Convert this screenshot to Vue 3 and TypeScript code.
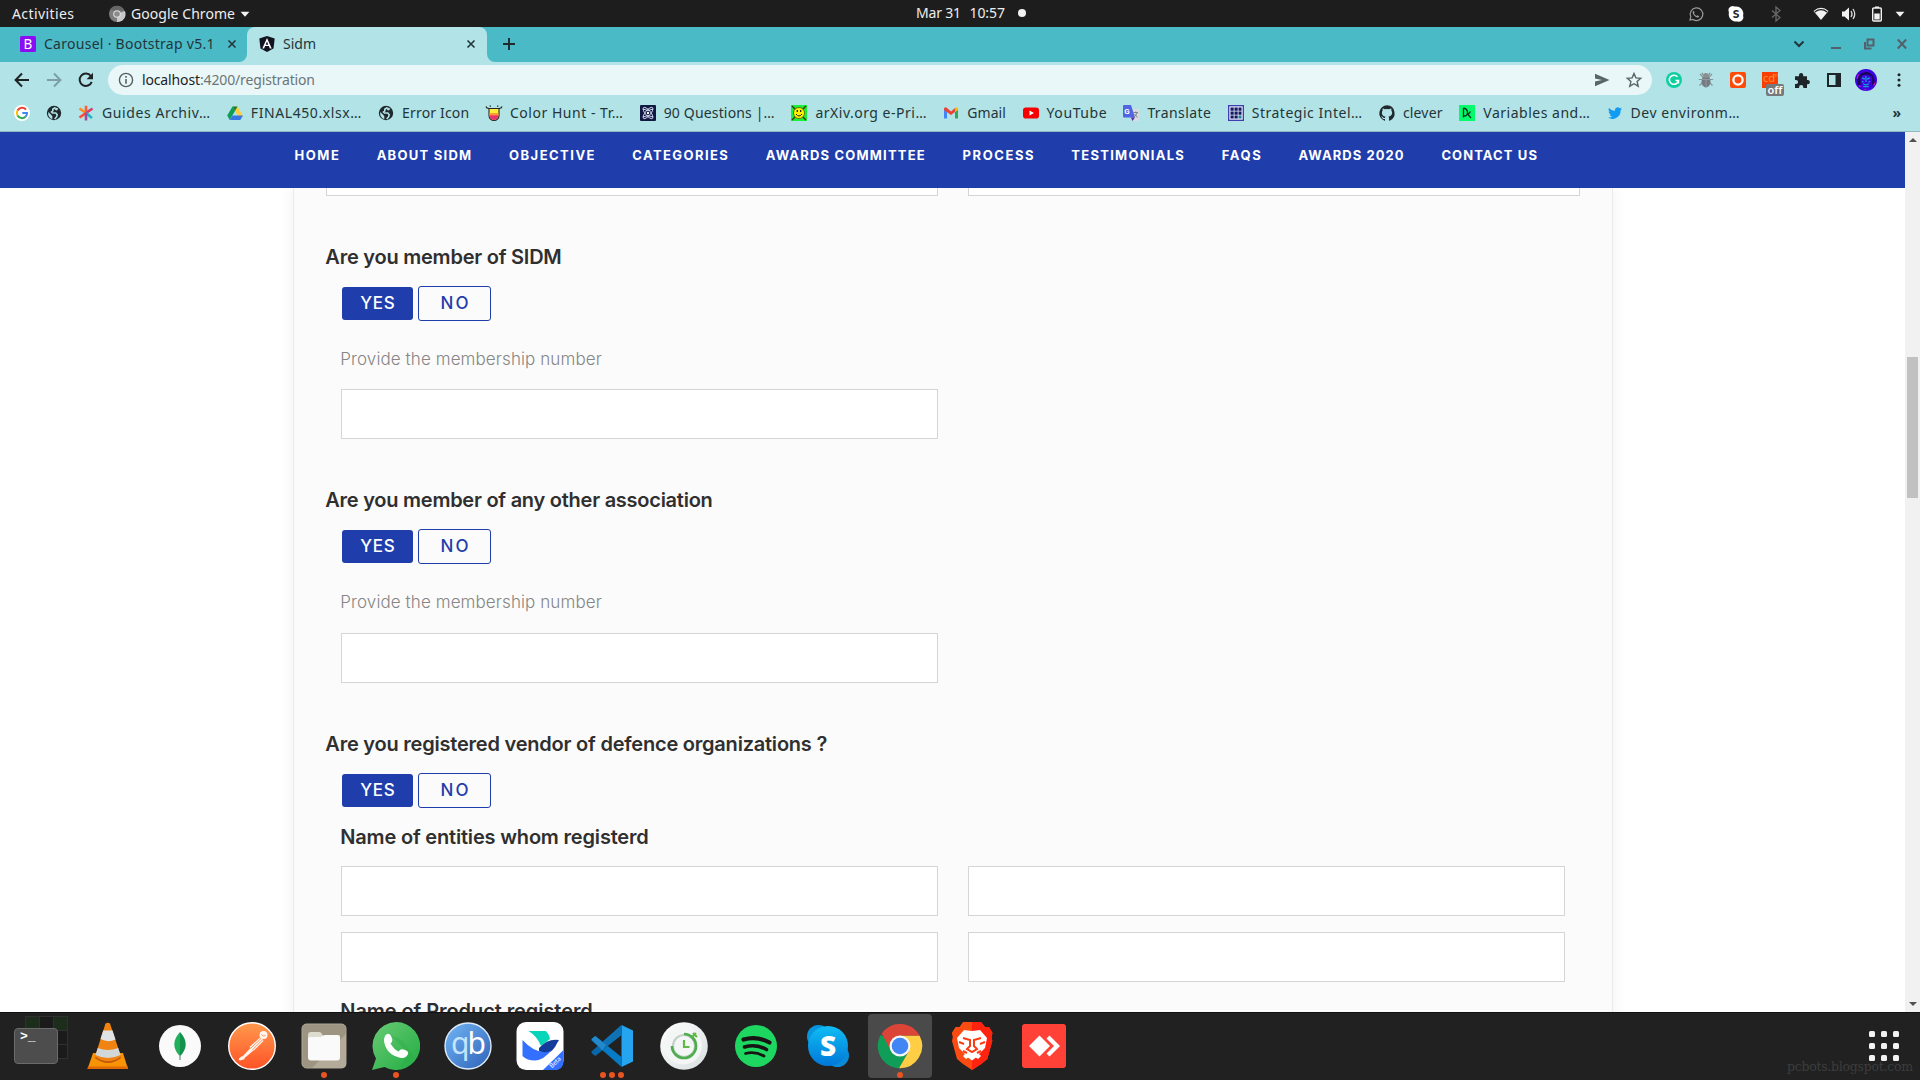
<script setup lang="ts">
import { h, type FunctionalComponent } from 'vue'

/* Tracks a label out (or in) so that it fills the given width in pixels. */
const vFit = {
  mounted(el: HTMLElement, binding: { value: number }) {
    const count = Array.from(el.textContent ?? '').length
    el.style.display = 'inline-block'
    el.style.whiteSpace = 'pre'
    el.style.letterSpacing = '0px'
    const natural = el.getBoundingClientRect().width
    if (count > 1) el.style.letterSpacing = `${(binding.value - natural) / (count - 1)}px`
    el.style.width = `${binding.value}px`
  },
}

const glyphs: Record<string, string> = {
  chromeGrey:
    '<circle cx="8" cy="8" r="8" fill="#7d7d7d"/><path d="M8 8L16 5A8 8 0 0 1 8 16Z" fill="#c9c9c9"/><path d="M1 4A8 8 0 0 1 15 4L8 5Z" fill="#666"/><circle cx="8" cy="8" r="3.8" fill="#e2e2e2"/><circle cx="8" cy="8" r="2.8" fill="#8b8b8b"/>',
  caret: '<path d="M3 5.5h10L8 11z" fill="#f2f2f2"/>',
  whatsappLine:
    '<path d="M2 14l.8-3.2A6.3 6.3 0 1 1 5 13.4z" fill="none" stroke="#9a9a9a" stroke-width="1.2"/><path d="M5.6 4.8l1 1.8-.6 1q1 1.8 2.6 2.4l1-.8 1.7 1q-.6 1.6-2.2 1.3Q5.500 10.300 4.600 6.600q0-1.300 1-1.800z" fill="#9a9a9a"/>',
  skypeMono:
    '<path d="M4.500 0a4 4 0 0 1 2 .6 7.300 7.300 0 0 1 8.600 9A4.400 4.400 0 0 1 9.500 15.400 7.300 7.300 0 0 1 .9 6.600 4.400 4.400 0 0 1 4.500 0z" fill="#fff"/><text x="8" y="12.300" text-anchor="middle" font-family="Lato, sans-serif" font-weight="900" font-size="12" fill="#222">S</text>',
  bluetooth: '<path d="M4 4.500l8 7L8 15V1l4 3.500-8 7" fill="none" stroke="#686868" stroke-width="1.300"/>',
  wifi: '<path d="M.5 5Q8-1.500 15.500 5L8 14z" fill="#f2f2f2"/><path d="M1.800 6Q8 1.300 14.200 6" fill="none" stroke="#1d1d1d" stroke-width="1.200"/>',
  volume:
    '<path d="M1 5.500h2.500L8 1.500v13L3.500 10.500H1z" fill="#f2f2f2"/><path d="M10 5q2 3 0 6M12 3q3.500 5 0 10" fill="none" stroke="#ddd" stroke-width="1.300"/>',
  battery: '<path d="M6 .5h4v1.500H6z" fill="#f2f2f2"/><rect x="3.700" y="2" width="8.600" height="13" rx="1" fill="none" stroke="#f2f2f2" stroke-width="1.400"/><path d="M5.300 7.500h5.400v6H5.300z" fill="#f2f2f2"/>',
  bootstrap:
    '<rect width="16" height="16" rx="1.500" fill="#8a0df5"/><text x="8" y="13" text-anchor="middle" font-family="Noto Sans, sans-serif" font-size="13.500" fill="#fff">B</text>',
  angular:
    '<path d="M8 0l7.700 2.500-1.200 10L8 16l-6.500-3.500L.3 2.500z" fill="#12141f"/><path d="M8 2L3.300 12.500h1.800l1-2.400h3.800l1 2.400h1.800zm0 3.600l1.300 3.100H6.700z" fill="#fff"/>',
  close: '<path d="M4.500 4.500l7 7M11.500 4.500l-7 7" stroke="#24353a" stroke-width="1.600"/>',
  plus: '<path d="M8 2v12M2 8h12" stroke="#1f2a2e" stroke-width="1.900"/>',
  chevron: '<path d="M3.500 5.500L8 10l4.500-4.500" fill="none" stroke="#22343a" stroke-width="2"/>',
  minimize: '<path d="M3 12h10" stroke="#55606a" stroke-width="2"/>',
  restore: '<path d="M6.500 3.500h6v6h-6zM4 6v6.500h6.500" fill="none" stroke="#55606a" stroke-width="2"/>',
  windowClose: '<path d="M3.800 3.500l8.400 9M12.200 3.500l-8.400 9" stroke="#55606a" stroke-width="2"/>',
  back: '<path d="M15 8H2M8 1.500L1.600 8 8 14.500" fill="none" stroke="#1f2326" stroke-width="2"/>',
  forward: '<path d="M1 8h13M8 1.500L14.400 8 8 14.500" fill="none" stroke="#7d9fa3" stroke-width="2"/>',
  reload: '<path d="M13.700 9.800A6.200 6.200 0 1 1 12.800 4" fill="none" stroke="#1f2326" stroke-width="2"/><path d="M15 .8v6.400H8.600z" fill="#1f2326"/>',
  info: '<circle cx="8" cy="8" r="6.600" fill="none" stroke="#566163" stroke-width="1.400"/><path d="M8 7v4.800M8 4v1.700" stroke="#566163" stroke-width="1.600"/>',
  send: '<path d="M1 1.800L15.500 8 1 14.200V9.500L8 8 1 6.500z" fill="#5b6466"/>',
  star: '<path d="M8 1.500l1.900 4.400 4.800.4-3.600 3.200 1.100 4.700L8 11.700l-4.200 2.500 1.100-4.700L1.300 6.300l4.800-.4z" fill="none" stroke="#5b6466" stroke-width="1.400"/>',
  grammarly:
    '<circle cx="8" cy="8" r="8" fill="#0fcfa0"/><path d="M11.500 4.800A4.600 4.600 0 1 0 12.500 8.500H9.500" fill="none" stroke="#fff" stroke-width="1.500"/><path d="M12.500 8v3.500" stroke="#fff" stroke-width="1.300"/>',
  bug: '<path d="M5 5L2 2M11 5l3-3M4 7.500H.8M12 7.500h3.200M4.500 10.500l-3 3M11.500 10.500l3 3M5 3L4 .8M11 3l1-2.200" stroke="#88949a" stroke-width="1.200"/><ellipse cx="8" cy="9.500" rx="4.500" ry="6" fill="#737b80"/><ellipse cx="8" cy="3.500" rx="3" ry="2.500" fill="#8b8f92"/><path d="M4 7.500h8M8 7.500V15" stroke="#9aa2a5" stroke-width=".8"/>',
  officeO: '<rect width="16" height="16" rx="2" fill="#ff4b0a"/><circle cx="8" cy="8" r="4.600" fill="none" stroke="#fff" stroke-width="2.300"/>',
  cdm: '<rect width="16" height="16" fill="#fb3e05"/><text x="1" y="10" font-family="Open Sans, sans-serif" font-size="11" fill="#ff9d30">cd</text><text x="11" y="5" font-family="Open Sans, sans-serif" font-size="6" fill="#ff9d30">m</text>',
  puzzle: '<path d="M1 4.200h4V3a2.100 2.100 0 0 1 4.200 0v1.200H13v3.900h.8a2.100 2.100 0 0 1 0 4.200H13V16H9.300v-1a2.100 2.100 0 0 0-4.200 0v1H1v-3.900h1a2.100 2.100 0 0 0 0-4.200H1z" fill="#1e2528"/>',
  panel: '<path d="M2 2h12v12H2z" fill="none" stroke="#1e2528" stroke-width="2"/><path d="M9.500 2H14v12H9.500z" fill="#1e2528"/>',
  avatar:
    '<circle cx="8" cy="8" r="8" fill="#3c02df"/><path d="M1.500 11Q1 3 8 2 14.500 3 14.500 11l-2 1V6.500Q11 4 8 4T4 6.500v5.500z" fill="#190556"/><path d="M5.200 6.500l2 .9M10.800 6.500l-2 .9M6 10.800q2 1.500 4 0M8 5v4.500M6 12.800h4M5 9l1.200.6M11 9l-1.200.6" stroke="#179ed5" stroke-width=".9" fill="none"/><path d="M1.500 7l1-3M13.500 12l1-2M7 14.500l1 1M3 12l1 1" stroke="#d413ba" stroke-width=".9"/>',
  dots: '<circle cx="8" cy="2.800" r="1.500" fill="#1e2528"/><circle cx="8" cy="8" r="1.500" fill="#1e2528"/><circle cx="8" cy="13.200" r="1.500" fill="#1e2528"/>',
  google:
    '<circle cx="8" cy="8" r="8" fill="#fff"/><path d="M12 4.600A5.200 5.200 0 0 0 3.500 5.400" fill="none" stroke="#ea4335" stroke-width="2"/><path d="M3.500 5.400a5.200 5.200 0 0 0 0 5.200" fill="none" stroke="#fbbc05" stroke-width="2"/><path d="M3.500 10.600a5.200 5.200 0 0 0 8 1.200" fill="none" stroke="#34a853" stroke-width="2"/><path d="M11.500 11.800Q13 10.300 13 8H8.300" fill="none" stroke="#4285f4" stroke-width="2"/>',
  globe:
    '<circle cx="8" cy="8" r="7.200" fill="#202a2e"/><path d="M9.500 2.500L6.800 4.200v1.700L5.500 7l1 1h3.300l1.400 1.700-.5 2-2 2.300" fill="none" stroke="#b2e3e6" stroke-width="1.600"/><path d="M2.300 7l4 4v3.200A6.300 6.300 0 0 1 2.300 7zM9.500 2.400l2.800 1L11 5.500 9 5z" fill="#b2e3e6"/>',
  asterisk:
    '<g stroke-width="2.600"><path d="M8 8V.8" stroke="#ff5b3a"/><path d="M8 8L1.500 3.500" stroke="#ff8a1e"/><path d="M8 8l6.500-4.500" stroke="#d93c6b"/><path d="M8 8l-6.500 4.500" stroke="#ff4a3a"/><path d="M8 8l6 5" stroke="#20b7c5"/><path d="M8 8v7.500" stroke="#a6479e"/></g>',
  drive: '<path d="M5.500 1.500h5L16 11h-5z" fill="#ffcf3f"/><path d="M5.500 1.500L8 6 2.700 15 .2 10.500z" fill="#0f9d58"/><path d="M5.500 10.500H16L13.300 15H2.700z" fill="#3777e3"/><path d="M5.500 1.500h5L8 6z" fill="#188038"/>',
  colorHunt:
    '<path d="M3 3.500h10V10.500a5 5 0 0 1-10 0z" fill="#ffef3c" stroke="#252525" stroke-width="1.100"/><path d="M3.500 8h9v2.500h-9z" fill="#ff9b2f"/><path d="M3.500 10.300h9Q12 15 8 15t-4.500-4.700z" fill="#e9356d"/><path d="M0 1.500Q.5 3.500 3 3.500h10q2.500 0 3-2M4.500 1.800L4 .5M11.500 1.800L12 .5" fill="none" stroke="#252525" stroke-width="1.200"/>',
  atom: '<rect width="16" height="16" rx="1" fill="#101940"/><g fill="none" stroke="#dfe6ff" stroke-width=".9"><ellipse cx="8" cy="8" rx="2.600" ry="7" transform="rotate(40 8 8)"/><ellipse cx="8" cy="8" rx="2.600" ry="7" transform="rotate(-40 8 8)"/><path d="M3 4q5 3 10 0M3 12q5-3 10 0"/></g><circle cx="8" cy="8" r="1.200" fill="#fff"/>',
  arxiv: '<rect width="16" height="16" fill="#19f038"/><path d="M1 1l14 14M15 1L1 15" stroke="#473b12" stroke-width="1.500"/><circle cx="8" cy="8" r="5.500" fill="#fff200" stroke="#57580c" stroke-width=".8"/><path d="M5 9q3 4 6 0" fill="none" stroke="#222"/><path d="M6.300 5v2M9.700 5v2" stroke="#222" stroke-width="1.300"/>',
  gmail: '<path d="M1 3v10.500h3V7z" fill="#4285f4"/><path d="M15 3v10.500h-3V7z" fill="#34a853"/><path d="M1 3.500Q2.500 1.500 4 3l4 3.500L12 3v4L8 10 1 5z" fill="#ea4335"/><path d="M12 3q2-1.500 3 .5V5l-3 2z" fill="#fbbc04"/>',
  youtube: '<rect y="2.500" width="16" height="11" rx="2.800" fill="#f60000"/><path d="M6.500 5.500v5L11 8z" fill="#fff"/>',
  translate:
    '<path d="M7 4h8q1 0 1 1v10q0 1-1 1h-5z" fill="#d8dce1"/><path d="M1 0h7l4 12.500H1q-1 0-1-1V1Q0 0 1 0z" fill="#5065e3"/><path d="M8 12.500h4L9.500 16z" fill="#5a2ba0"/><text x="1.200" y="9" font-family="Roboto, sans-serif" font-size="8" font-weight="700" fill="#fff">G</text><path d="M10.500 7.500h4.500M12.800 6.500v1.500M14 8q-1 3-3.300 4.500M11.500 9l3 3.500" fill="none" stroke="#6e7b82" stroke-width=".9"/>',
  grid: '<rect width="16" height="16" fill="#3f3fb4"/><rect x="1.300" y="1.300" width="13.400" height="13.400" fill="#e7e9f7"/><g fill="#161a63"><path d="M2.500 2.500h3.200v3.200H2.500zM6.500 2.500h3.200v3.200H6.500zM10.500 2.500h3v3.200h-3zM2.500 6.500h3.200v3.200H2.500zM6.500 6.500h3.200v3.200H6.500zM10.500 6.500h3v3.200h-3zM2.500 10.500h3.200v3H2.500zM6.500 10.500h3.200v3H6.500z"/></g><path d="M10.500 10.500h3v3h-3z" fill="#238296"/>',
  github:
    '<path d="M8 .3a8 8 0 0 0-2.500 15.500c.4.100.5-.2.500-.4v-1.500c-2.200.5-2.700-1-2.700-1-.4-.9-.9-1.200-.9-1.200-.7-.5.100-.5.100-.5.800.1 1.200.8 1.200.8.700 1.300 1.900.9 2.300.7.100-.5.300-.9.500-1.100-1.800-.2-3.600-.9-3.600-4 0-.9.300-1.600.8-2.100-.1-.2-.4-1 .1-2.100 0 0 .7-.2 2.200.8a7.500 7.500 0 0 1 4 0c1.500-1 2.200-.8 2.200-.8.400 1.100.2 1.900.1 2.100.5.600.8 1.300.8 2.100 0 3.100-1.900 3.800-3.700 4 .3.300.6.800.6 1.500v2.200c0 .2.100.5.600.4A8 8 0 0 0 8 .3z" fill="#202a30"/>',
  devcamp: '<rect width="16" height="16" fill="#04fb6b"/><path d="M4.500 3v9.500M4.500 3Q8.500 4 8.500 7.500T5 11M11.500 6.500L9 9.500l3 3.500" fill="none" stroke="#103420" stroke-width="1.300"/>',
  twitter:
    '<path d="M15 3.700a6 6 0 0 1-1.600.5 2.900 2.900 0 0 0 1.200-1.600 6 6 0 0 1-1.800.7A2.900 2.900 0 0 0 7.900 6 8.200 8.200 0 0 1 2 3a2.900 2.900 0 0 0 .9 3.800 3 3 0 0 1-1.300-.3 2.900 2.900 0 0 0 2.300 2.800 3 3 0 0 1-1.300.1 2.900 2.900 0 0 0 2.700 2A5.800 5.800 0 0 1 1 12.500a8.200 8.200 0 0 0 12.600-7.300A6 6 0 0 0 15 3.700z" fill="#129bf2"/>',
}

const dockGlyphs: Record<string, string> = {
  vlc: '<path d="M9 31h30l5 16H3.500z" fill="#f99306"/><path d="M4 44.500h40v2.500H3.500z" fill="#e26a05"/><path d="M11 36Q24 46 37 36l-2-5H13z" fill="#c4560a"/><path d="M21.500 1.500Q24 0 26 1.500l11 33Q24 44 11 34.500z" fill="#f08312"/><path d="M19.200 8.500h9.300l3 9Q24 21 16.500 17z" fill="#dfe3e6"/><path d="M13.800 26Q24 30 34.200 26l2.300 7Q24 39 11.500 33z" fill="#d2d7da"/>',
  mongo: '<circle cx="24" cy="24" r="21" fill="#fafafa"/><path d="M24 10Q12.500 22.500 24 34.500z" fill="#22ae5b"/><path d="M24 10q11.500 12.500 0 24.500z" fill="#12924c"/><path d="M24 33v5" stroke="#80a893" stroke-width="1.500"/>',
  postman:
    '<defs><linearGradient id="pm" x2="0" y2="1"><stop stop-color="#ff9a4d"/><stop offset="1" stop-color="#ff5226"/></linearGradient></defs><circle cx="24" cy="24" r="23.300" fill="url(#pm)" stroke="#fff" stroke-width="1.400"/><circle cx="35.500" cy="13" r="4" fill="#fff5ed"/><path d="M32 15.500q3 1 3.500 3.500L26 28.500l-4.500-3.500z" fill="#fff5ed"/><path d="M23 25.500l3 2.500-10 8.500-2-1.500zM14 34l3 3-5 1.500q-2-.5-1-2z" fill="#fff5ed"/><path d="M33 16.500L22.500 26.500M34.500 17.800L24.500 27.800" stroke="#f98a52" stroke-width=".9"/><path d="M33.500 12.500q2 2.500 4 1" fill="none" stroke="#f98a52" stroke-width=".9"/>',
  files:
    '<rect x="2" y="2" width="44" height="44" rx="4.500" fill="#9d9481" stroke="#afa898" stroke-width="1"/><path d="M46 12v30q0 4-4 4H12z" fill="#b3aa9a"/><path d="M8 13q0-3 3-3h8q2 0 3 2l1.500 3H40v8H8z" fill="#dedbd0"/><path d="M8 17q0-2 2-2h11q2-2 4-2h13q2 0 2 2v20.500q0 3-3 3H11q-3 0-3-3z" fill="#fafafa"/>',
  whatsapp:
    '<defs><linearGradient id="wa" x2="1" y2="1"><stop stop-color="#6acb74"/><stop offset="1" stop-color="#21ac43"/></linearGradient></defs><path d="M24 0a24 24 0 1 1-11.500 45L0 48l4-11.500A24 24 0 0 1 24 0z" fill="url(#wa)"/><path d="M18 13l16 15 2 4-7 13 13-10L30 18z" fill="#2ba844" opacity=".35"/><path d="M15 12q3-1 4.500 3 2 4-1 6.500 3.500 6 8 8 2.500-3.500 6.500-1.500 4 1.500 3 4-2 4.500-7 4Q14 33 12 19q0-5.500 3-7z" fill="#fff"/>',
  qb: '<defs><linearGradient id="qb" x2="1" y2="1"><stop stop-color="#74b6f5"/><stop offset="1" stop-color="#2c62b8"/></linearGradient></defs><circle cx="24" cy="24" r="23" fill="url(#qb)" stroke="#dcebfa" stroke-width="1.400"/><text x="7" y="32" font-family="Noto Sans, sans-serif" font-size="30" fill="#c3e5ff" textLength="17">q</text><text x="23.500" y="32" font-family="Noto Sans, sans-serif" font-size="30" fill="#fff" textLength="17">b</text>',
  lark: '<rect x=".5" y="0" width="47" height="48" rx="9.500" fill="#fff"/><path d="M12.500 9H30q3 3 4 8l-9 7Q21 14 12.500 9z" fill="#06d5b9"/><path d="M23 26q9-10 20-8-2 3-4 7-7 10-16 4z" fill="#143c99"/><path d="M6.500 18q10 11 21 12 4 1 8-2Q28 38 19 38.500 11 38.500 6.500 34z" fill="#3370ff"/><path d="M27 48L47.500 28v11q0 9-9 9z" fill="#3370ff"/><text transform="translate(36 46.500) rotate(-45)" font-family="Lato, sans-serif" font-size="6.500" fill="#fff">Beta</text>',
  vscode:
    '<path d="M33.500 3L45 8.500v31L33.500 45z" fill="#25a5ef"/><path d="M3.500 17l3.800-3 26.200 21V45L3.500 18.500z" fill="#087bc5"/><path d="M3.500 31l3.800 3 26.200-21V3L3.500 29.500z" fill="#0867aa"/><path d="M33.500 3v10L14 28l-4-4z" fill="#0e72b5"/><path d="M3.500 17l3.800-3L18 23l-3.500 5.500z" fill="#2389cb"/>',
  timer:
    '<defs><linearGradient id="tm" x2="1" y2="1"><stop stop-color="#fff"/><stop offset="1" stop-color="#d8dee0"/></linearGradient></defs><circle cx="24" cy="24" r="23.800" fill="url(#tm)"/><circle cx="23" cy="23.500" r="19" fill="#f4f6f6"/><circle cx="24" cy="24" r="11" fill="none" stroke="#c3cec8" stroke-width="2"/><path d="M24 12a12 12 0 1 1-12 12" fill="none" stroke="#4eae4f" stroke-width="2.700"/><path d="M24 18v7h5.500M32 15l4-4M33 11l4 4" fill="none" stroke="#62b845" stroke-width="2.200"/>',
  spotify:
    '<circle cx="24" cy="24" r="21" fill="#1ed760"/><g fill="none" stroke="#191414" stroke-linecap="round"><path d="M11.500 17.500Q25 13.500 37.500 20.500" stroke-width="4.200"/><path d="M12.500 25Q24 21.500 34.500 27.500" stroke-width="3.600"/><path d="M13.500 31.500Q23 29 32 34" stroke-width="2.800"/></g>',
  skype:
    '<defs><linearGradient id="sk" x2="0" y2="1"><stop stop-color="#10bdf4"/><stop offset="1" stop-color="#0077d9"/></linearGradient></defs><circle cx="14.500" cy="14.500" r="11.500" fill="#0795dd"/><circle cx="33.500" cy="33.500" r="11.500" fill="#098bd8"/><circle cx="24" cy="24" r="20" fill="url(#sk)"/><text x="24" y="34" text-anchor="middle" font-family="Open Sans, sans-serif" font-weight="800" font-size="28" fill="#fff">S</text>',
  chrome:
    '<path d="M24 24L4.700 13A22.300 22.300 0 0 0 23 46.300l8-13z" fill="#109d58"/><path d="M24 13.500h19.500A22.300 22.300 0 0 1 23 46.300L33 29z" fill="#ffce44"/><path d="M24 13.500H43.600A22.300 22.300 0 0 0 5.700 11.500L14.500 28z" fill="#db4437"/><circle cx="24" cy="24" r="10.500" fill="#f6f6f6"/><circle cx="24" cy="24" r="8.300" fill="#4285f4"/>',
  brave:
    '<path d="M15 0h18l4 5h4l3.500 6-1 4 .8 4-5 18-6 5L24 48l-9-6-6-5L4 19l.8-4-1-4L7.500 5h4z" fill="#fb4b12"/><path d="M24 0h9l4 5h4l3.500 6-1 4 .8 4-5 18-6 5L24 48z" fill="#ff2310"/><path d="M16 8l8 1 8-1 7 8-2 10-6 6 2 2-3 3-6-4-6 4-3-3 2-2-6-6-2-10z" fill="#fff"/><path d="M15 16l7 2v6l-3 3 5 3 5-3-3-3v-6l7-2M11 20l5 2M37 20l-5 2M15 29l4 2M33 29l-4 2" fill="none" stroke="#fb3b12" stroke-width="2"/><path d="M18 34l6-3 6 3-6 4.500z" fill="#fff"/>',
  anydesk: '<rect x="2" y="2" width="44" height="44" rx="3" fill="#ff4137"/><path d="M9 24l10.500-10.500L30 24 19.500 34.500z" fill="#fff"/><path d="M26.500 16.500l3-3L40 24 29.500 34.500l-3-3L34 24z" fill="#fff"/>',
}

const Glyph: FunctionalComponent<{ name: string; size?: number }> = (props) =>
  h('svg', {
    viewBox: '0 0 16 16',
    width: props.size ?? 16,
    height: props.size ?? 16,
    style: 'display:block;flex:none;overflow:visible',
    innerHTML: glyphs[props.name],
  })
Glyph.props = ['name', 'size']

const DockGlyph: FunctionalComponent<{ name: string }> = (props) =>
  h('svg', { viewBox: '0 0 48 48', width: 48, height: 48, style: 'display:block', innerHTML: dockGlyphs[props.name] })
DockGlyph.props = ['name']

interface Label {
  text: string
  width: number
}
interface Bookmark extends Label {
  icon: string
}

const bookmarks: Bookmark[] = [
  { icon: 'asterisk', text: 'Guides Archiv…', width: 108 },
  { icon: 'drive', text: 'FINAL450.xlsx…', width: 110.5 },
  { icon: 'globe', text: 'Error Icon', width: 67 },
  { icon: 'colorHunt', text: 'Color Hunt - Tr…', width: 113 },
  { icon: 'atom', text: '90 Questions |…', width: 111 },
  { icon: 'arxiv', text: 'arXiv.org e-Pri…', width: 111 },
  { icon: 'gmail', text: 'Gmail', width: 38.5 },
  { icon: 'youtube', text: 'YouTube', width: 60 },
  { icon: 'translate', text: 'Translate', width: 63.5 },
  { icon: 'grid', text: 'Strategic Intel…', width: 110.5 },
  { icon: 'github', text: 'clever', width: 39.5 },
  { icon: 'devcamp', text: 'Variables and…', width: 106.5 },
  { icon: 'twitter', text: 'Dev environm…', width: 109 },
]

const menu: Label[] = [
  { text: 'HOME', width: 44.3 },
  { text: 'ABOUT SIDM', width: 94.5 },
  { text: 'OBJECTIVE', width: 85.5 },
  { text: 'CATEGORIES', width: 95.5 },
  { text: 'AWARDS COMMITTEE', width: 159 },
  { text: 'PROCESS', width: 71 },
  { text: 'TESTIMONIALS', width: 112.5 },
  { text: 'FAQS', width: 39 },
  { text: 'AWARDS 2020', width: 105 },
  { text: 'CONTACT US', width: 95.5 },
]

const memberships: Label[] = [
  { text: 'Are you member of SIDM', width: 236.5 },
  { text: 'Are you member of any other association', width: 387.5 },
]

const extensions = ['grammarly', 'bug', 'officeO', 'cdm', 'puzzle', 'panel', 'avatar']

const dock: { icon: string; windows: number; active?: boolean }[] = [
  { icon: 'vlc', windows: 0 },
  { icon: 'mongo', windows: 0 },
  { icon: 'postman', windows: 0 },
  { icon: 'files', windows: 1 },
  { icon: 'whatsapp', windows: 1 },
  { icon: 'qb', windows: 0 },
  { icon: 'lark', windows: 0 },
  { icon: 'vscode', windows: 3 },
  { icon: 'timer', windows: 0 },
  { icon: 'spotify', windows: 0 },
  { icon: 'skype', windows: 0 },
  { icon: 'chrome', windows: 1, active: true },
  { icon: 'brave', windows: 0 },
  { icon: 'anydesk', windows: 0 },
]
</script>

<template>
  <div class="desktop">
    <header class="topbar">
      <div class="topbar-left">
        <span v-fit="62">Activities</span>
        <Glyph class="app-icon" name="chromeGrey" />
        <span v-fit="104">Google Chrome</span>
        <Glyph class="app-caret" name="caret" :size="14" />
      </div>
      <div class="clock">
        <span v-fit="45">Mar 31</span>
        <span v-fit="35.5">10:57</span>
        <i></i>
      </div>
      <div class="status">
        <Glyph name="whatsappLine" />
        <Glyph name="skypeMono" />
        <Glyph name="bluetooth" />
        <Glyph class="wifi" name="wifi" />
        <Glyph class="tight" name="volume" />
        <Glyph class="tight" name="battery" />
        <Glyph class="last" name="caret" :size="14" />
      </div>
    </header>

    <div class="tabs">
      <div class="tab idle">
        <Glyph name="bootstrap" />
        <span v-fit="170.5">Carousel · Bootstrap v5.1</span>
        <Glyph class="tab-close" name="close" />
      </div>
      <div class="tab active">
        <Glyph name="angular" />
        <span v-fit="33">Sidm</span>
        <Glyph class="tab-close" name="close" />
      </div>
      <div class="newtab"><Glyph name="plus" /></div>
      <div class="window-buttons">
        <Glyph name="chevron" />
        <Glyph name="minimize" />
        <Glyph name="restore" />
        <Glyph name="windowClose" />
      </div>
    </div>

    <div class="toolbar">
      <div class="slot"><Glyph name="back" /></div>
      <div class="slot"><Glyph name="forward" /></div>
      <div class="slot"><Glyph name="reload" /></div>
      <div class="omnibox">
        <Glyph name="info" />
        <p class="url"><b v-fit="58">localhost</b><span v-fit="115">:4200/registration</span></p>
        <Glyph name="send" />
        <Glyph name="star" />
      </div>
      <div v-for="name in extensions" :key="name" class="slot">
        <Glyph :name="name" :size="name === 'avatar' ? 22 : 16" />
        <em v-if="name === 'cdm'">off</em>
      </div>
      <div class="slot kebab"><Glyph name="dots" /></div>
    </div>

    <div class="bookmarks">
      <Glyph class="lone" name="google" />
      <Glyph class="lone" name="globe" />
      <div v-for="mark in bookmarks" :key="mark.text" class="bookmark">
        <Glyph :name="mark.icon" />
        <span v-fit="mark.width">{{ mark.text }}</span>
      </div>
      <span class="more">»</span>
    </div>

    <div class="viewport">
      <main class="page">
        <nav class="menu">
          <span v-for="item in menu" :key="item.text" v-fit="item.width">{{ item.text }}</span>
        </nav>
        <div class="scroller">
          <section class="card">
            <div class="row cut"><div class="field"></div><div class="field"></div></div>
            <template v-for="item in memberships" :key="item.text">
              <h3><span v-fit="item.width">{{ item.text }}</span></h3>
              <div class="inset">
                <div class="choice"><button class="yes"><span v-fit="34.5">YES</span></button><button class="no"><span v-fit="28">NO</span></button></div>
                <label><span v-fit="261.5">Provide the membership number</span></label>
                <div class="row"><div class="field"></div><div class="field blank"></div></div>
              </div>
            </template>
            <h3><span v-fit="502">Are you registered vendor of defence organizations ?</span></h3>
            <div class="inset">
              <div class="choice"><button class="yes"><span v-fit="34.5">YES</span></button><button class="no"><span v-fit="28">NO</span></button></div>
              <h4><span v-fit="308.5">Name of entities whom registerd</span></h4>
              <div class="row"><div class="field"></div><div class="field"></div></div>
              <div class="row next"><div class="field"></div><div class="field"></div></div>
              <h4><span v-fit="252.5">Name of Product registerd</span></h4>
            </div>
          </section>
        </div>
      </main>
      <aside class="scrollbar">
        <i class="arrow up"></i>
        <div class="thumb"></div>
        <i class="arrow down"></i>
      </aside>
    </div>

    <footer class="dock">
      <div class="app terminal">
        <div class="shadow-grid"><i v-for="n in 9" :key="n"></i></div>
        <div class="prompt">&gt;_</div>
      </div>
      <div v-for="app in dock" :key="app.icon" class="app" :class="{ current: app.active }">
        <DockGlyph :name="app.icon" />
        <div class="windows"><i v-for="n in app.windows" :key="n"></i></div>
      </div>
      <div class="launcher"><i v-for="n in 9" :key="n"></i></div>
      <div class="watermark"><span v-fit="126">pcbots.blogspot.com</span></div>
    </footer>
  </div>
</template>

<style>
body {
  margin: 0;
  overflow: hidden;
}
</style>

<style scoped>
* {
  box-sizing: border-box;
}
.desktop {
  width: 1920px;
  height: 1080px;
  display: flex;
  flex-direction: column;
  overflow: hidden;
  font: 14px/20px 'Noto Sans', 'Open Sans', sans-serif;
  color: #24353a;
}
.topbar {
  height: 27px;
  flex: none;
  display: grid;
  grid-template-columns: 916px 1fr auto;
  align-items: center;
  background: #1d1d1d;
  color: #ededed;
}
.topbar-left,
.clock,
.status {
  display: flex;
  align-items: center;
}
.topbar-left {
  padding-left: 12px;
}
.app-icon {
  margin: 0 6px 0 35px;
}
.app-caret {
  margin-left: 3px;
}
.clock {
  gap: 8.5px;
  padding-bottom: 1px;
}
.clock i {
  width: 8px;
  height: 8px;
  margin-left: 4px;
  border-radius: 50%;
  background: #f2f2f2;
}
.status {
  gap: 24px;
  padding-right: 13px;
}
.status .wifi {
  margin-left: 5px;
}
.status .tight {
  margin-left: -12px;
}
.status .last {
  margin-left: -16px;
}
.tabs {
  height: 35px;
  flex: none;
  display: flex;
  background: linear-gradient(90deg, #4bbac7 240px, #b2e3e6 240px, #b2e3e6 495px, #4bbac7 495px);
}
.tab {
  height: 35px;
  display: flex;
  align-items: center;
  gap: 8px;
  padding-bottom: 1px;
}
.tab.idle {
  width: 247px;
  padding-left: 20px;
  border-radius: 0 0 8px 0;
  background: #4bbac7;
}
.tab.idle .tab-close {
  margin-left: 1.5px;
}
.tab.active {
  position: relative;
  width: 240px;
  padding-left: 12px;
  padding-right: 8px;
  background: linear-gradient(#4bbac7 12px, #b2e3e6 12px);
}
.tab.active::before {
  content: '';
  position: absolute;
  inset: 0;
  border-radius: 8px 8px 0 0;
  background: #b2e3e6;
}
.tab.active > * {
  position: relative;
}
.tab.active .tab-close {
  margin-left: auto;
}
.newtab {
  flex: 1;
  display: flex;
  align-items: center;
  padding: 0 0 1px 14px;
  border-radius: 0 0 0 8px;
  background: #4bbac7;
}
.window-buttons {
  display: flex;
  align-items: center;
  gap: 17px;
  padding: 0 10px 1px 0;
  background: #4bbac7;
}
.window-buttons svg:first-child {
  margin-right: 4px;
}
.toolbar {
  height: 36px;
  flex: none;
  display: flex;
  align-items: center;
  padding: 0 5px 0 6px;
  background: #b2e3e6;
}
.slot {
  position: relative;
  width: 32px;
  height: 36px;
  display: flex;
  align-items: center;
  justify-content: center;
}
.slot em {
  position: absolute;
  left: 12px;
  top: 22px;
  width: 18px;
  height: 12px;
  border-radius: 2px;
  background: #76797b;
  color: #fff;
  font: 600 11px/11px 'Noto Sans', sans-serif;
  text-align: center;
}
.kebab {
  margin-left: 1px;
}
.omnibox {
  width: 1544px;
  height: 30px;
  display: flex;
  align-items: center;
  gap: 16px;
  margin: 0 6px;
  padding: 0 10px;
  border-radius: 15px;
  background: #e9f7f8;
}
.url {
  flex: 1;
  margin: 0 0 0 -8px;
  display: flex;
  color: #6c7577;
}
.url b {
  font-weight: 400;
  color: #1c2325;
}
.bookmarks {
  height: 34px;
  flex: none;
  display: flex;
  align-items: center;
  padding: 0 19px 4px 14px;
  border-bottom: 1px solid #8fb9bc;
  background: #b2e3e6;
}
.lone {
  margin-right: 16px;
}
.bookmark {
  display: flex;
  align-items: center;
  gap: 8px;
  margin-right: 16.8px;
}
.more {
  margin-left: auto;
  font-weight: 700;
}
.viewport {
  height: 880px;
  flex: none;
  display: flex;
  background: #fff;
}
.page {
  width: 1905px;
  height: 880px;
  overflow: hidden;
}
.menu {
  height: 56px;
  display: flex;
  gap: 37.85px;
  padding: 13px 0 0 294.5px;
  background: #1f3dab;
  color: #fff;
  font: 700 13px/20px Inter, sans-serif;
}
.scroller {
  height: 824px;
  padding-left: 293px;
  overflow: hidden;
}
.card {
  width: 1320px;
  height: 900px;
  padding: 0 32px;
  border: solid #ebebeb;
  border-width: 0 1px;
  background: #fbfbfb;
  box-shadow: 0 0 15px rgba(0, 0, 0, 0.06);
  color: #302f2f;
  font-family: Inter, sans-serif;
}
.row {
  display: flex;
  gap: 30px;
}
.field {
  flex: 1;
  height: 50px;
  border: 1px solid #d5d5d5;
  background: #fff;
}
.blank {
  visibility: hidden;
}
.cut .field {
  height: 8px;
  border-top: 0;
}
.inset {
  padding: 0 15px;
}
.next {
  margin-top: 16px;
}
h3,
h4 {
  margin: 0;
  font-size: 20px;
  line-height: 24px;
  font-weight: 600;
}
h3 {
  margin-top: 49px;
}
h4 {
  margin: 17px 0;
}
h3 span,
h4 span,
label span {
  margin-left: -0.7px;
  vertical-align: top;
}
.choice {
  height: 35px;
  margin-top: 17px;
  padding-left: 1px;
  display: flex;
  align-items: center;
  gap: 5px;
}
button {
  padding: 0 0 1px;
  border: 0;
  border-radius: 3px;
  font: 500 17px/20px Inter, sans-serif;
}
.yes {
  width: 71px;
  height: 33px;
  background: #1f3dab;
  color: #fff;
}
.no {
  width: 73px;
  height: 35px;
  border: 1px solid #1f3dab;
  background: transparent;
  color: #1f3dab;
}
label {
  display: block;
  height: 20px;
  margin: 28px 0 20.4px;
  color: #868686;
  font-size: 17px;
  line-height: 20px;
  font-weight: 300;
}
.scrollbar {
  width: 15px;
  height: 880px;
  display: flex;
  flex-direction: column;
  align-items: center;
  justify-content: space-between;
  padding: 6px 0;
  background: #f1f1f1;
}
.arrow {
  width: 0;
  height: 0;
  border: solid transparent;
  border-width: 0 4px;
}
.up {
  border-bottom: 4px solid #505050;
}
.down {
  border-top: 4px solid #505050;
}
.thumb {
  width: 11px;
  height: 141px;
  margin-bottom: 290px;
  background: #c1c1c1;
}
.dock {
  position: relative;
  height: 68px;
  flex: none;
  display: flex;
  gap: 8px;
  padding: 1px 0 0 4px;
  border-top: 1px solid #111;
  background: #212121;
}
.app {
  width: 64px;
  height: 64px;
  display: flex;
  flex-direction: column;
  align-items: center;
  padding-top: 8px;
  border-radius: 4px;
}
.current {
  background: #4a4a4a;
}
.windows {
  height: 6px;
  display: flex;
  gap: 3px;
  margin-top: 2px;
}
.windows i {
  width: 6px;
  height: 6px;
  border-radius: 50%;
  background: #e95420;
}
.terminal {
  position: relative;
}
.shadow-grid {
  position: absolute;
  left: 21px;
  top: 2px;
  display: grid;
  grid-template-columns: repeat(3, 13px);
  grid-auto-rows: 13px;
  gap: 1px;
  padding: 1px;
  background: #303030;
}
.shadow-grid i {
  background: #1b1b1b;
}
.shadow-grid i:nth-child(1),
.shadow-grid i:nth-child(3) {
  background: #1c2d1b;
}
.prompt {
  position: absolute;
  left: 10px;
  top: 14px;
  width: 44px;
  height: 36px;
  padding-left: 5px;
  border: 1px solid #6b6b6b;
  border-radius: 4px;
  background: #4d4d4d;
  color: #fff;
  font: 700 13px/16px 'Liberation Mono', monospace;
}
.launcher {
  display: grid;
  grid-template-columns: repeat(3, 6px);
  grid-auto-rows: 6px;
  gap: 6px;
  margin: 17px 21px 0 auto;
}
.launcher i {
  border-radius: 1.5px;
  background: #f2f2f2;
}
.watermark {
  position: absolute;
  right: 7px;
  bottom: 3px;
  color: #3d3d3d;
  font: 12.5px/20px 'DejaVu Serif', serif;
}
</style>
